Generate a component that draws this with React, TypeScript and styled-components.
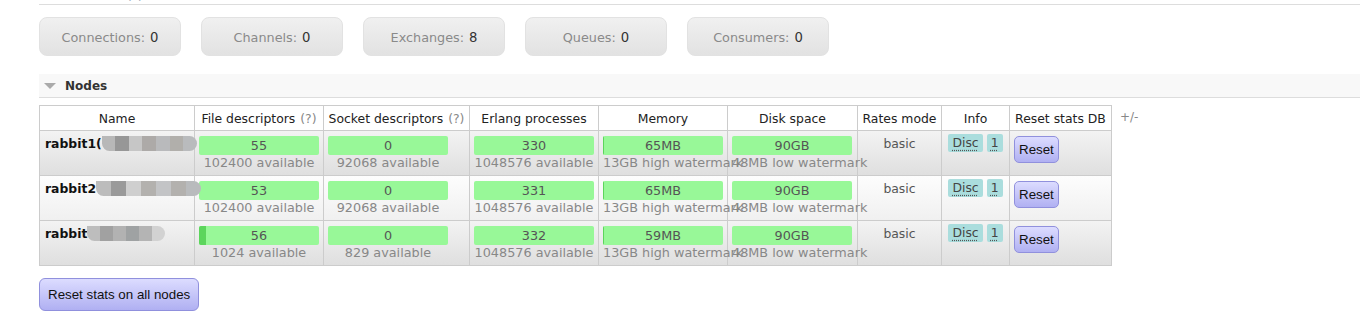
import styled, { createGlobalStyle } from "styled-components";

const GlobalStyle = createGlobalStyle`
  body {
    margin: 0;
    background: #fff;
    font: 12px "DejaVu Sans", Verdana, sans-serif;
    color: #444;
  }
`;

type Metric = {
  value: string;
  sub: string;
  used: number;
};

type NodeRow = {
  name: string;
  blur: string[];
  fd: Metric;
  sockets: Metric;
  procs: Metric;
  memory: Metric;
  disk: Metric;
};

const stats = [
  { label: "Connections", value: 0 },
  { label: "Channels", value: 0 },
  { label: "Exchanges", value: 8 },
  { label: "Queues", value: 0 },
  { label: "Consumers", value: 0 },
];

const nodes: NodeRow[] = [
  {
    name: "rabbit1(",
    blur: ["#b8b8b8", "#979797", "#c6c6c6", "#adaaa8", "#b9babc", "#b1afab", "#b9bbbd"],
    fd: { value: "55", sub: "102400 available", used: 55 / 102400 },
    sockets: { value: "0", sub: "92068 available", used: 0 },
    procs: { value: "330", sub: "1048576 available", used: 330 / 1048576 },
    memory: { value: "65MB", sub: "13GB high watermark", used: 0.006 },
    disk: { value: "90GB", sub: "48MB low watermark", used: 0 },
  },
  {
    name: "rabbit2",
    blur: ["#bcbcbc", "#9a9a9a", "#cfcfcf", "#b3b1ae", "#c3c4c6", "#b3b1ae", "#b9bbbd"],
    fd: { value: "53", sub: "102400 available", used: 53 / 102400 },
    sockets: { value: "0", sub: "92068 available", used: 0 },
    procs: { value: "331", sub: "1048576 available", used: 331 / 1048576 },
    memory: { value: "65MB", sub: "13GB high watermark", used: 0.006 },
    disk: { value: "90GB", sub: "48MB low watermark", used: 0 },
  },
  {
    name: "rabbit",
    blur: ["#bdbdbd", "#a1a1a1", "#b2b2b2", "#9fa2a3", "#b4b4b4", "#d2d2d2"],
    fd: { value: "56", sub: "1024 available", used: 56 / 1024 },
    sockets: { value: "0", sub: "829 available", used: 0 },
    procs: { value: "332", sub: "1048576 available", used: 332 / 1048576 },
    memory: { value: "59MB", sub: "13GB high watermark", used: 0.005 },
    disk: { value: "90GB", sub: "48MB low watermark", used: 0 },
  },
];

const blurWidths = [95, 105, 78];

/* style */
const Page = styled.div`
  padding-left: 39px;
`;

const TopBar = styled.div`
  height: 4px;
  border-bottom: 1px solid #ddd;
  display: flex;
  align-items: flex-end;
  overflow: hidden;
  padding-left: 88px;
`;

const TopHelp = styled.span`
  line-height: 14px;
  margin-bottom: 1px;
  color: #9ab;
`;

const StatsRow = styled.div`
  display: flex;
  gap: 20px;
  margin-top: 12px;
`;

const StatBox = styled.div`
  box-sizing: border-box;
  width: 142px;
  height: 39px;
  padding-top: 1px;
  border: 1px solid #e2e2e2;
  border-radius: 8px;
  background: linear-gradient(#f0f0f0, #e2e2e2);
  display: flex;
  align-items: center;
  justify-content: center;
  color: #8a8a8a;
  font-size: 12.8px;
`;

const StatValue = styled.span`
  color: #333;
  margin-left: 5px;
  font-size: 13.2px;
`;

const SectionHeader = styled.div`
  margin-top: 18px;
  height: 24px;
  padding-top: 1px;
  box-sizing: border-box;
  background: #f8f8f8;
  border-bottom: 1px solid #ddd;
  display: flex;
  align-items: center;
  padding-left: 5px;
  gap: 9px;
  font-weight: bold;
  color: #333;
`;

const Arrow = styled.span`
  width: 0;
  height: 0;
  border-left: 6px solid transparent;
  border-right: 6px solid transparent;
  border-top: 6px solid #aaa;
`;

const TableRow = styled.div`
  display: flex;
  align-items: flex-start;
  gap: 8px;
  margin-top: 7px;
`;

const Grid = styled.div`
  display: grid;
  grid-template-columns: 155px 129px 146px 129px 129px 130px 84px 68px 102px;
  border-left: 1px solid #ccc;
  border-top: 1px solid #ccc;
`;

const HeadCell = styled.div`
  box-sizing: border-box;
  height: 25px;
  border-right: 1px solid #ccc;
  border-bottom: 1px solid #ccc;
  display: flex;
  align-items: center;
  justify-content: center;
  white-space: nowrap;
  color: #222;
  font-size: 12.4px;
  background: #fff;
`;

const Help = styled.span`
  color: #888;
  margin-left: 5px;
`;

const Cell = styled.div<{ $alt: boolean; $align?: string }>`
  box-sizing: border-box;
  height: 45px;
  border-right: 1px solid #ccc;
  border-bottom: 1px solid #ccc;
  padding: 5px 4px 0;
  white-space: nowrap;
  text-align: ${(p) => p.$align || "left"};
  line-height: 15px;
  background: ${(p) =>
    p.$alt ? "linear-gradient(#fdfdfd, #f0f0f0)" : "linear-gradient(#f3f3f3, #dfdfdf)"};
`;

const NodeName = styled.span`
  font-weight: bold;
  font-size: 12.4px;
  color: #111;
  padding-left: 1px;
`;

const Blur = styled.span`
  display: inline-flex;
  vertical-align: -3px;
  height: 15px;
  border-radius: 0 8px 8px 8px;
  overflow: hidden;
  filter: blur(0.6px);
  position: relative;
  z-index: 1;
`;

const BlurBlock = styled.span<{ $color: string }>`
  flex: 1;
  background: ${(p) => p.$color};
`;

const Bar = styled.div`
  position: relative;
  width: 120px;
  height: 19px;
  border-radius: 2px;
  background: #98f898;
  overflow: hidden;
  text-align: center;
  line-height: 19px;
  color: #555;
  font-size: 12.8px;
`;

const BarFill = styled.span`
  position: absolute;
  left: 0;
  top: 0;
  bottom: 0;
  background: #5cd55c;
`;

const BarText = styled.span`
  position: relative;
`;

const Sub = styled.div`
  width: 120px;
  text-align: center;
  white-space: nowrap;
  color: #888;
  font-size: 12.8px;
  line-height: 16px;
  position: relative;
`;

const Rates = styled.span`
  color: #555;
  font-size: 12.4px;
`;

const Badges = styled.div`
  display: flex;
  justify-content: center;
  gap: 4px;
  margin-top: -2px;
`;

const Badge = styled.abbr`
  display: inline-block;
  height: 18px;
  line-height: 17px;
  padding: 0 4px;
  border-radius: 2px;
  background: #aadddd;
  color: #444;
  font-size: 12.4px;
  text-decoration: underline dotted #555;
  text-underline-offset: 3px;
`;

const ResetButton = styled.button<{ $big?: boolean }>`
  font-family: "Liberation Sans", Arial, sans-serif;
  font-size: 13.33px;
  line-height: 15px;
  color: #111;
  padding: ${(p) => (p.$big ? "8px 8px" : "5px 4px")};
  border: 1px solid #9090dd;
  border-radius: ${(p) => (p.$big ? "6px" : "5px")};
  background: linear-gradient(#dcdcff, #b0b0f2);
  cursor: pointer;
`;

const PlusMinus = styled.span`
  color: #888;
  line-height: 25px;
`;

const Footer = styled.div`
  margin-top: 12px;
`;

const MetricCell = ({ m, alt }: { m: Metric; alt: boolean }) => (
  <Cell $alt={alt}>
    <Bar>
      <BarFill style={{ width: `${Math.min(m.used, 1) * 100}%` }} />
      <BarText>{m.value}</BarText>
    </Bar>
    <Sub>{m.sub}</Sub>
  </Cell>
);

const App = () => {
  return (
    <Page>
      <GlobalStyle />
      <TopBar>
        <TopHelp>(?)</TopHelp>
      </TopBar>
      <StatsRow>
        {stats.map((s) => (
          <StatBox key={s.label}>
            {s.label}:<StatValue>{s.value}</StatValue>
          </StatBox>
        ))}
      </StatsRow>
      <SectionHeader>
        <Arrow />
        Nodes
      </SectionHeader>
      <TableRow>
        <Grid>
          <HeadCell>Name</HeadCell>
          <HeadCell>
            File descriptors<Help>(?)</Help>
          </HeadCell>
          <HeadCell>
            Socket descriptors<Help>(?)</Help>
          </HeadCell>
          <HeadCell>Erlang processes</HeadCell>
          <HeadCell>Memory</HeadCell>
          <HeadCell>Disk space</HeadCell>
          <HeadCell>Rates mode</HeadCell>
          <HeadCell>Info</HeadCell>
          <HeadCell>Reset stats DB</HeadCell>
          {nodes.map((n, i) => {
            const alt = i % 2 === 1;
            return [
              <Cell key={`n${i}`} $alt={alt}>
                <NodeName>{n.name}</NodeName>
                <Blur style={{ width: blurWidths[i] }}>
                  {n.blur.map((c, j) => (
                    <BlurBlock key={j} $color={c} />
                  ))}
                </Blur>
              </Cell>,
              <MetricCell key={`f${i}`} m={n.fd} alt={alt} />,
              <MetricCell key={`s${i}`} m={n.sockets} alt={alt} />,
              <MetricCell key={`p${i}`} m={n.procs} alt={alt} />,
              <MetricCell key={`m${i}`} m={n.memory} alt={alt} />,
              <MetricCell key={`d${i}`} m={n.disk} alt={alt} />,
              <Cell key={`r${i}`} $alt={alt} $align="center">
                <Rates>basic</Rates>
              </Cell>,
              <Cell key={`i${i}`} $alt={alt}>
                <Badges>
                  <Badge title="Disc node">Disc</Badge>
                  <Badge title="Cores">1</Badge>
                </Badges>
              </Cell>,
              <Cell key={`x${i}`} $alt={alt}>
                <ResetButton>Reset</ResetButton>
              </Cell>,
            ];
          })}
        </Grid>
        <PlusMinus>+/-</PlusMinus>
      </TableRow>
      <Footer>
        <ResetButton $big>Reset stats on all nodes</ResetButton>
      </Footer>
    </Page>
  );
};

export default App;
